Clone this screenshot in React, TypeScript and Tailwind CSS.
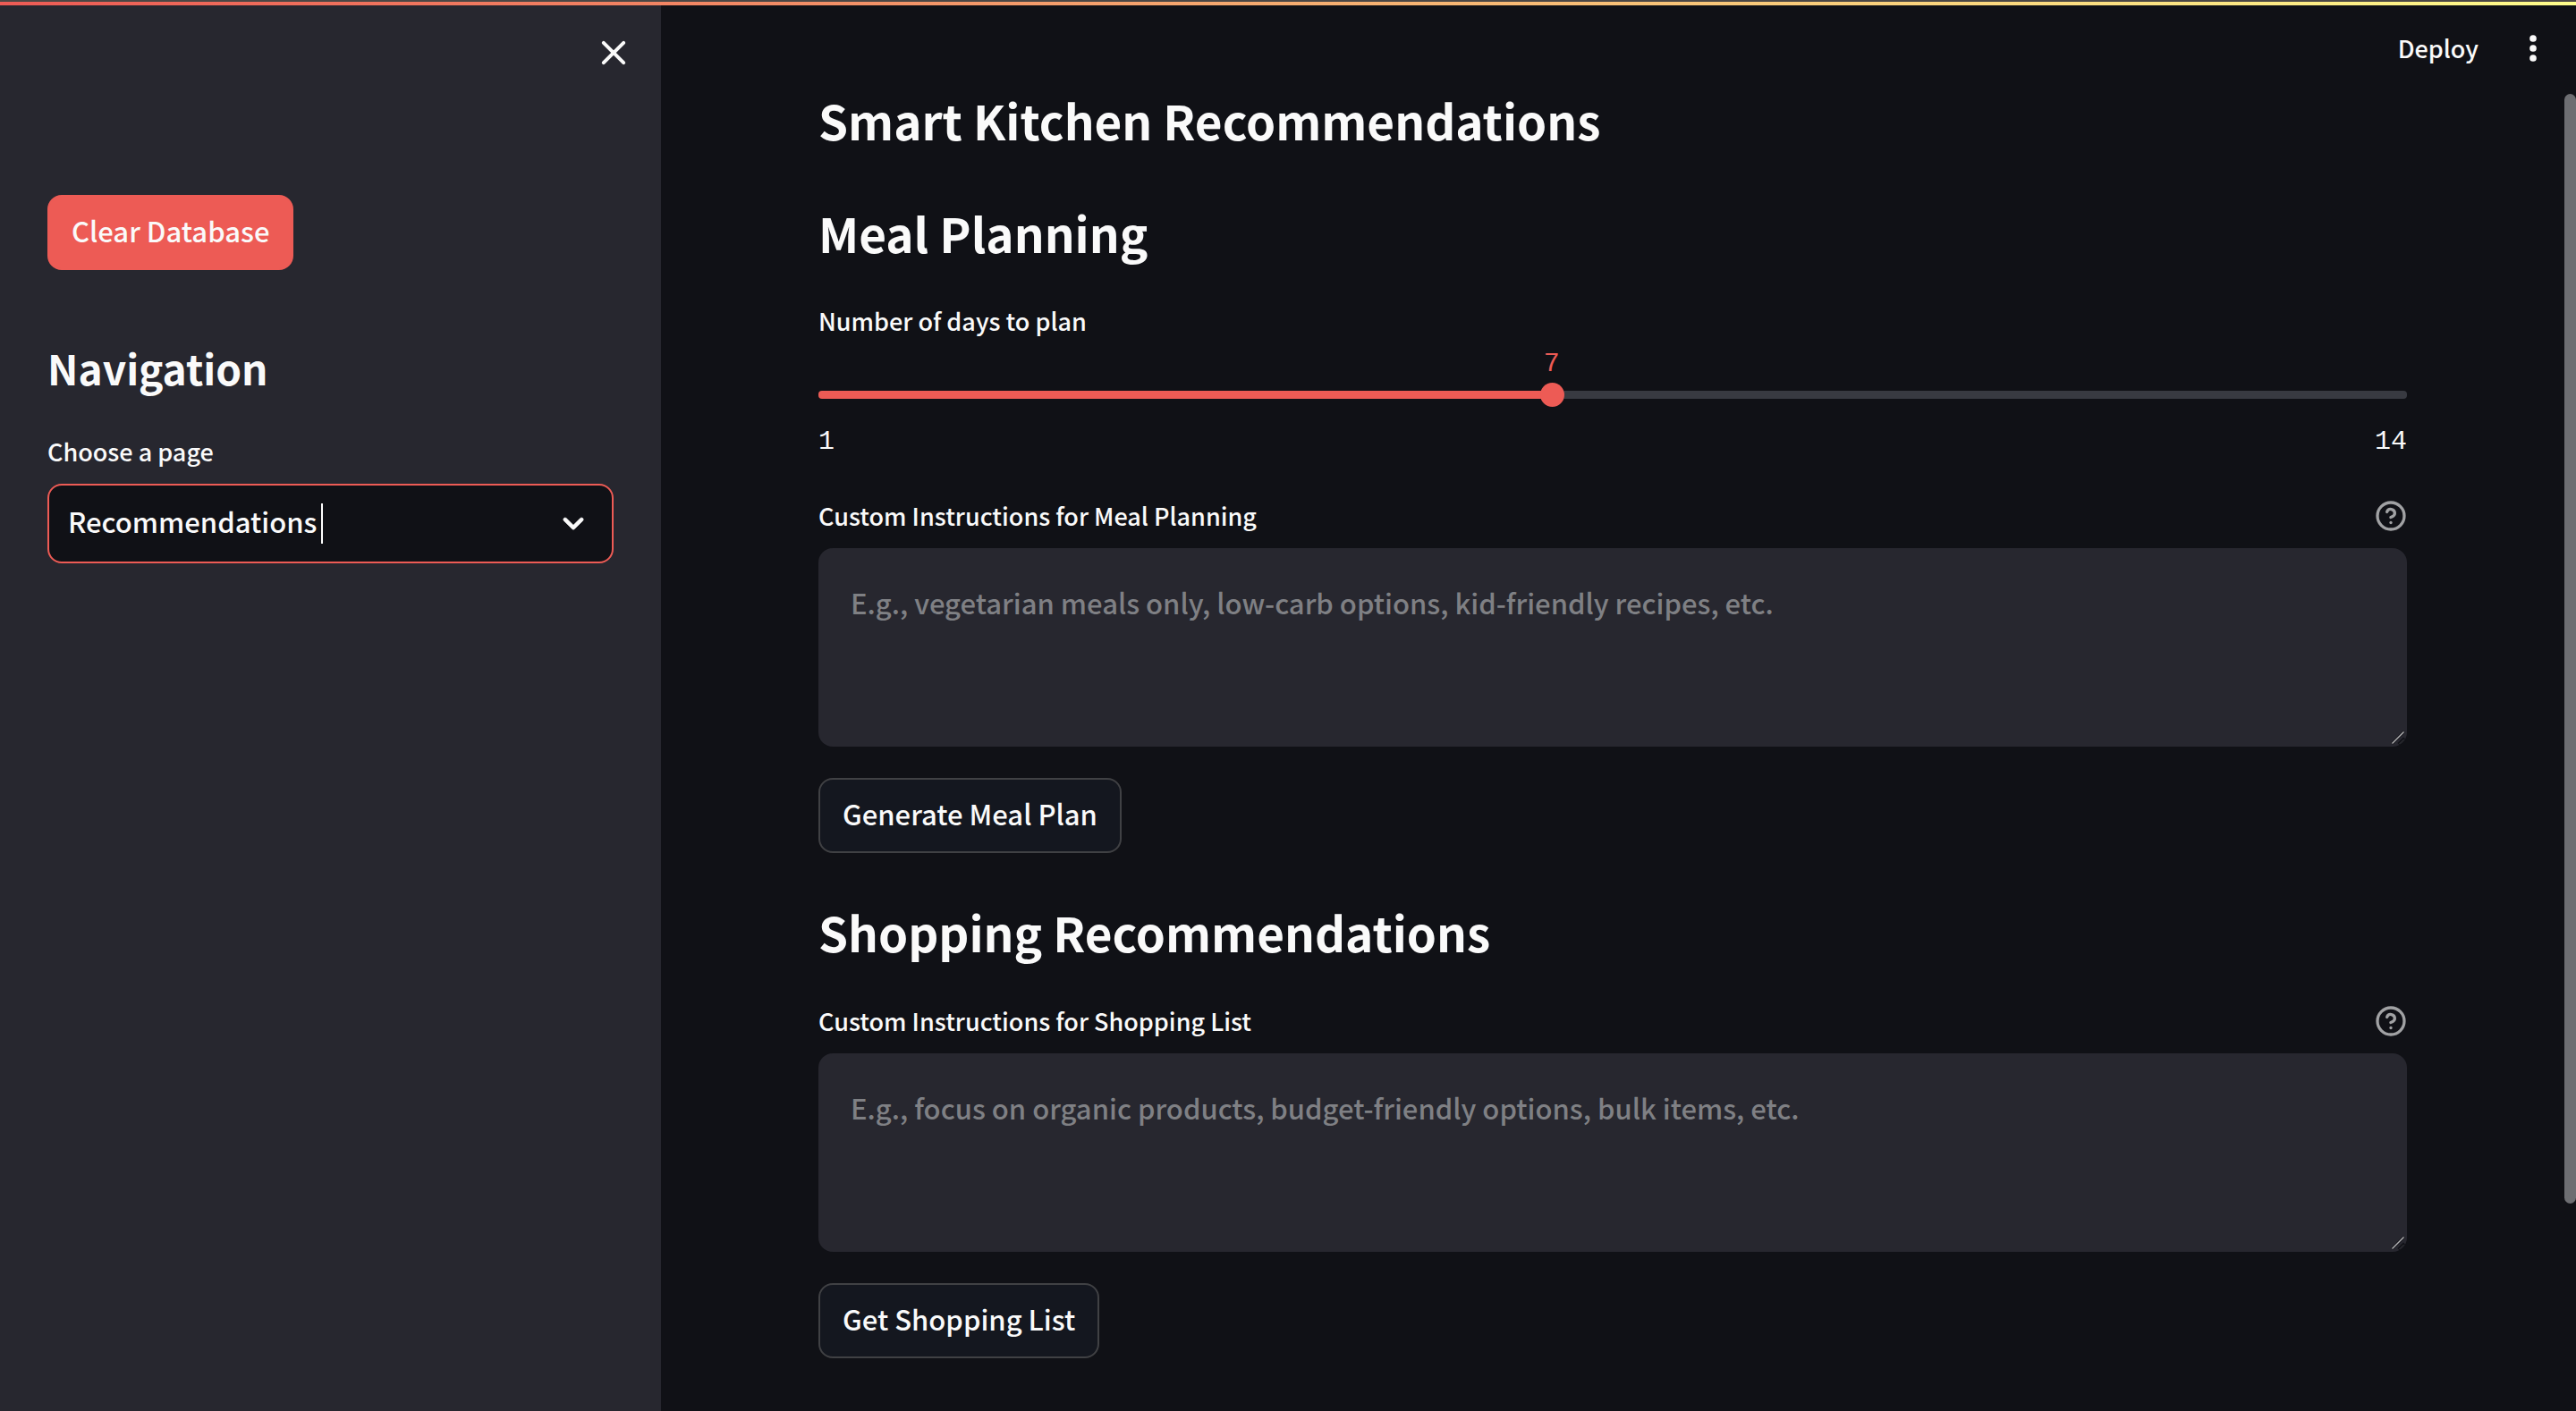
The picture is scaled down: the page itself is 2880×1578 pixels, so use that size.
import { useState, type CSSProperties } from "react";

const PAGES = ["Recommendations", "Inventory", "Upload Receipt"];

function CloseIcon() {
  return (
    <svg viewBox="0 0 24 24" className="size-12" fill="currentColor" aria-hidden="true">
      <path d="M18.3 5.71a.996.996 0 0 0-1.41 0L12 10.59 7.11 5.7A.996.996 0 1 0 5.7 7.11L10.59 12 5.7 16.89a.996.996 0 1 0 1.41 1.41L12 13.41l4.89 4.89a.996.996 0 1 0 1.41-1.41L13.41 12l4.89-4.89c.38-.38.38-1.02 0-1.4z" />
    </svg>
  );
}

function ChevronIcon() {
  return (
    <svg viewBox="0 0 24 24" className="size-12" fill="currentColor" aria-hidden="true">
      <path
        d="M15.88 9.29 12 13.17 8.12 9.29a.996.996 0 1 0-1.41 1.41l4.59 4.59c.39.39 1.02.39 1.41 0l4.59-4.59a.996.996 0 0 0 0-1.41c-.39-.38-1.03-.39-1.42 0z"
        stroke="currentColor"
        strokeWidth="0.3"
      />
    </svg>
  );
}

function MenuIcon() {
  return (
    <svg viewBox="0 0 24 24" className="size-11" fill="currentColor" aria-hidden="true">
      <circle cx="12" cy="6" r="2.1" />
      <circle cx="12" cy="12" r="2.1" />
      <circle cx="12" cy="18" r="2.1" />
    </svg>
  );
}

function HelpIcon() {
  return (
    <svg
      viewBox="0 0 24 24"
      className="size-9"
      fill="none"
      stroke="currentColor"
      strokeWidth="2.2"
      strokeLinecap="round"
      strokeLinejoin="round"
      aria-hidden="true"
    >
      <circle cx="12" cy="12" r="10" />
      <path d="M9.09 9a3 3 0 0 1 5.83 1c0 2-3 3-3 3" />
      <path d="M12 17h.01" />
    </svg>
  );
}

function Sidebar() {
  return (
    <aside className="flex w-[739px] shrink-0 flex-col bg-[#27272f]">
      <div className="flex justify-end pt-[29px] pr-[29px]">
        <button type="button" aria-label="Close sidebar">
          <CloseIcon />
        </button>
      </div>
      <div className="flex flex-col items-start px-[53px] pt-[135px]">
        <button
          type="button"
          className="h-[84px] rounded-2xl border-2 border-[#ed5b55] bg-[#ed5b55] px-[25px] pb-1 text-[31px]"
        >
          Clear Database
        </button>
        <h2 className="mt-[81px] text-[46px] leading-[56px] font-bold">Navigation</h2>
        <label htmlFor="page" className="mt-[46px] text-[27px] leading-10">
          Choose a page
        </label>
        <div className="relative mt-4 w-full">
          <select
            id="page"
            className="h-[89px] w-full appearance-none rounded-2xl border-2 border-[#ed5b55] bg-[#101116] px-[21px] pb-1 text-[31px] outline-none"
          >
            {PAGES.map((page) => (
              <option key={page}>{page}</option>
            ))}
          </select>
          <span className="pointer-events-none absolute top-[22px] left-[306px] h-[45px] w-0.5 bg-white" />
          <span className="pointer-events-none absolute top-5 right-[21px]">
            <ChevronIcon />
          </span>
        </div>
      </div>
    </aside>
  );
}

function DaysSlider() {
  const min = 1;
  const max = 14;
  const [days, setDays] = useState(7);
  const progress = `${((days - min) / (max - min)) * 100}%`;
  return (
    <div className="mt-[47px]" style={{ "--progress": progress } as CSSProperties}>
      <label htmlFor="days" className="block text-[27px] leading-10">
        Number of days to plan
      </label>
      <div className="mt-[13px] flex font-['Liberation_Mono',monospace] text-[30px] leading-[30px] font-normal text-[#ed5b55]">
        <span className="w-(--progress)" />
        <output htmlFor="days" className="flex w-0 justify-center">
          {days}
        </output>
      </div>
      <input
        id="days"
        type="range"
        min={min}
        max={max}
        value={days}
        onChange={(e) => setDays(Number(e.target.value))}
        className="mt-[6px] block h-[27px] w-full cursor-pointer appearance-none bg-transparent outline-none [&::-webkit-slider-runnable-track]:h-[9px] [&::-webkit-slider-runnable-track]:rounded [&::-webkit-slider-runnable-track]:bg-[linear-gradient(to_right,#ed5b55_var(--progress),#383a41_var(--progress))] [&::-webkit-slider-thumb]:-mt-[9px] [&::-webkit-slider-thumb]:size-[27px] [&::-webkit-slider-thumb]:appearance-none [&::-webkit-slider-thumb]:rounded-full [&::-webkit-slider-thumb]:bg-[#ed5b55]"
      />
      <div className="mt-6 flex justify-between font-['Liberation_Mono',monospace] text-[30px] leading-[30px] font-normal">
        <span>{min}</span>
        <span>{max}</span>
      </div>
    </div>
  );
}

type InstructionsProps = { id: string; label: string; placeholder: string; action: string };

function Instructions({ id, label, placeholder, action }: InstructionsProps) {
  return (
    <div className="mt-12 flex flex-col items-start">
      <div className="flex w-full items-center justify-between">
        <label htmlFor={id} className="text-[27px] leading-10">
          {label}
        </label>
        <button type="button" aria-label={`Help for ${label}`} className="text-[#a1a2a4]">
          <HelpIcon />
        </button>
      </div>
      <div className="relative mt-4 flex w-full">
        <textarea
          id={id}
          rows={3}
          placeholder={placeholder}
          className="w-full resize-y rounded-2xl bg-[#27272f] p-9 text-[31px] leading-[50px] outline-none placeholder:text-[#7f8084] [&::-webkit-resizer]:hidden"
        />
        <svg
          viewBox="0 0 16 16"
          className="pointer-events-none absolute right-[2px] bottom-[2px] size-4"
          fill="none"
          aria-hidden="true"
        >
          <path d="M1.5 14.5 14.5 1.5M8.5 15 15 8.5" stroke="#101116" strokeWidth="3" />
          <path d="M1.5 14.5 14.5 1.5" stroke="#b4b4b6" strokeWidth="1.5" />
          <path d="M9.5 15 14.5 10" stroke="#3a3b40" strokeWidth="1" />
        </svg>
      </div>
      <button
        type="button"
        className="mt-[35px] h-[84px] rounded-2xl border-2 border-[#404144] bg-[#14171f] px-[25px] pb-1 text-[31px]"
      >
        {action}
      </button>
    </div>
  );
}

export default function App() {
  return (
    <div className="flex min-h-screen flex-col bg-[#101116] font-['Noto_Sans_CJK_SC',sans-serif] font-medium text-[#fafafa]">
      <div className="h-0.5 bg-[#4b4745]" />
      <div className="h-1 bg-[linear-gradient(90deg,#ed5b55,#fffd8b)]" />
      <div className="flex flex-1">
        <Sidebar />
        <div className="flex min-w-0 flex-1 flex-col">
          <header className="flex h-24 items-center justify-end gap-[39px] pr-[26px]">
            <button type="button" className="text-[27px] leading-10">
              Deploy
            </button>
            <button type="button" aria-label="Main menu">
              <MenuIcon />
            </button>
          </header>
          <div className="flex flex-1">
            <main className="min-w-0 flex-1 px-44">
              <h1 className="text-[53px] leading-16 font-bold">Smart Kitchen Recommendations</h1>
              <section className="mt-[62px]">
                <h2 className="text-[53px] leading-16 font-bold">Meal Planning</h2>
                <DaysSlider />
                <Instructions
                  id="meal-instructions"
                  label="Custom Instructions for Meal Planning"
                  placeholder="E.g., vegetarian meals only, low-carb options, kid-friendly recipes, etc."
                  action="Generate Meal Plan"
                />
              </section>
              <section className="mt-14">
                <h2 className="text-[53px] leading-16 font-bold">Shopping Recommendations</h2>
                <Instructions
                  id="shopping-instructions"
                  label="Custom Instructions for Shopping List"
                  placeholder="E.g., focus on organic products, budget-friendly options, bulk items, etc."
                  action="Get Shopping List"
                />
              </section>
            </main>
            <div className="w-[13px] pt-[3px]" aria-hidden="true">
              <div className="h-[1241px] rounded-full bg-[#6d6e72]" />
            </div>
          </div>
        </div>
      </div>
    </div>
  );
}
